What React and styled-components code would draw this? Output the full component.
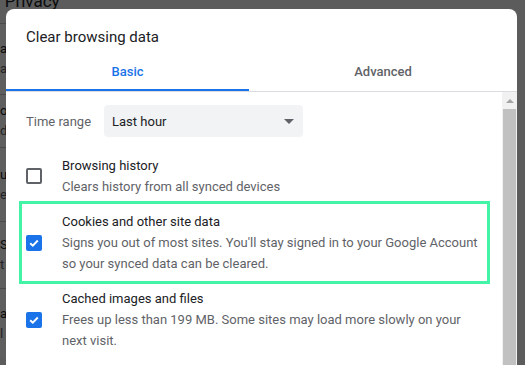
import React from "react"
import styled, { createGlobalStyle } from "styled-components"

const GlobalStyle = createGlobalStyle`
  html, body {
    margin: 0;
    padding: 0;
    overflow: hidden;
    background: #f8f9fa;
  }
  body {
    font-family: Roboto, "Liberation Sans", sans-serif;
    -webkit-font-smoothing: antialiased;
  }
`

const Screen = styled.div`
  position: relative;
  width: 525px;
  height: 365px;
  overflow: hidden;
  background: #f8f9fa;
`

// page behind the modal
const BackPage = styled.div`
  display: flex;
  flex-direction: column;
`

const BackHeading = styled.div`
  margin-top: -9px;
  margin-left: -34px;
  font-size: 17px;
  line-height: 20px;
  color: #202124;
`

const BackCard = styled.div`
  margin-top: 12px;
  width: 6px;
  overflow: hidden;
  background: #fff;
`

const BackRow = styled.div`
  display: flex;
  flex-direction: column;
  justify-content: center;
  height: ${p => p.h}px;
  border-top: 1px solid #c8c8c8;
  font-size: 13px;
  line-height: 20px;
  color: #202124;
  white-space: nowrap;
`

const BackSub = styled.span`
  color: #5f6368;
`

const Scrim = styled.div`
  position: absolute;
  inset: 0;
  background: rgba(0, 0, 0, 0.63);
`

const Dialog = styled.div`
  position: absolute;
  left: 6px;
  top: 9px;
  width: 511px;
  height: 400px;
  background: #fff;
  border-radius: 8px 8px 0 0;
  display: flex;
  flex-direction: column;
  overflow: hidden;
`

const Title = styled.h2`
  margin: 0;
  padding: 18px 20px 0;
  font-size: 15px;
  line-height: 20px;
  font-weight: 400;
  color: #202124;
`

const Tabs = styled.div`
  display: grid;
  grid-template-columns: 243px 1fr;
  margin-top: 8px;
  border-bottom: 1px solid #dadce0;
`

const Tab = styled.div`
  height: 36px;
  box-sizing: border-box;
  display: flex;
  align-items: center;
  justify-content: center;
  padding-bottom: 1px;
  font-size: 13px;
  font-weight: 500;
  color: ${p => (p.active ? "#1a73e8" : "#5f6368")};
  border-bottom: 2px solid ${p => (p.active ? "#1a73e8" : "transparent")};
`

const Body = styled.div`
  display: flex;
  flex: 1;
  min-height: 0;
`

const Content = styled.div`
  flex: 1;
  padding: 13px 15px 0 16px;
`

const Scrollbar = styled.div`
  width: 15px;
  background: #f1f1f1;
  display: flex;
  flex-direction: column;
  align-items: center;
`

const ArrowUp = styled.div`
  margin-top: 7px;
  width: 0;
  height: 0;
  border-left: 4px solid transparent;
  border-right: 4px solid transparent;
  border-bottom: 4px solid #a3a3a3;
`

const Thumb = styled.div`
  margin-top: 6px;
  align-self: stretch;
  margin-left: 1px;
  margin-right: 1px;
  flex: 1;
  background: #c1c1c1;
`

const RangeRow = styled.div`
  display: flex;
  align-items: center;
  padding-left: 4px;
`

const RangeLabel = styled.span`
  font-size: 13px;
  color: #5f6368;
  margin-right: 13px;
`

const Select = styled.div`
  width: 199px;
  height: 32px;
  box-sizing: border-box;
  display: flex;
  align-items: center;
  justify-content: space-between;
  padding: 0 9px 0 8px;
  background: #f1f3f4;
  border-radius: 4px;
  font-size: 13px;
  color: #202124;
`

const Caret = styled.span`
  width: 0;
  height: 0;
  border-left: 5px solid transparent;
  border-right: 5px solid transparent;
  border-top: 5px solid #5f6368;
`

const List = styled.div`
  margin-top: 11px;
  display: flex;
  flex-direction: column;
`

const Row = styled.div`
  display: flex;
  align-items: center;
  padding: 7px 0 7px 4px;
  outline: ${p => (p.highlight ? "3px solid #44f4a6" : "none")};
`

const Box = styled.span`
  flex: none;
  width: 16px;
  height: 16px;
  box-sizing: border-box;
  border-radius: 2px;
  display: flex;
  align-items: center;
  justify-content: center;
  background: ${p => (p.checked ? "#1a73e8" : "transparent")};
  border: ${p => (p.checked ? "none" : "2px solid #5f6368")};
`

const Text = styled.div`
  margin-left: 20px;
  flex: 1;
  font-size: 13px;
  line-height: 21px;
`

const ItemTitle = styled.div`
  color: #202124;
`

const ItemSub = styled.div`
  color: #5f6368;
`

const Check = () => (
  <svg width="12" height="12" viewBox="0 0 12 12">
    <path d="M2.2 6.2 L4.8 8.7 L9.8 3.5" fill="none" stroke="#fff" strokeWidth="1.9" />
  </svg>
)

const items = [
  {
    title: "Browsing history",
    sub: "Clears history from all synced devices",
    checked: false,
  },
  {
    title: "Cookies and other site data",
    sub: "Signs you out of most sites. You'll stay signed in to your Google Account so your synced data can be cleared.",
    checked: true,
    highlight: true,
  },
  {
    title: "Cached images and files",
    sub: "Frees up less than 199 MB. Some sites may load more slowly on your next visit.",
    checked: true,
  },
]

const backRows = [
  { h: 70, a: "ar", b: "ar" },
  { h: 52, a: "ok", b: "d" },
  { h: 73, a: "u", b: "e" },
  { h: 66, a: "S", b: "t" },
  { h: 69, a: "a", b: "l" },
]

export default function App() {
  return (
    <Screen>
      <GlobalStyle />
      <BackPage>
        <BackHeading>Your Privacy</BackHeading>
        <BackCard>
          {backRows.map(r => (
            <BackRow key={r.a} h={r.h}>
              <span>{r.a}</span>
              <BackSub>{r.b}</BackSub>
            </BackRow>
          ))}
        </BackCard>
      </BackPage>
      <Scrim />
      <Dialog>
        <Title>Clear browsing data</Title>
        <Tabs>
          <Tab active>Basic</Tab>
          <Tab>Advanced</Tab>
        </Tabs>
        <Body>
          <Content>
            <RangeRow>
              <RangeLabel>Time range</RangeLabel>
              <Select>
                Last hour
                <Caret />
              </Select>
            </RangeRow>
            <List>
              {items.map(it => (
                <Row key={it.title} highlight={it.highlight}>
                  <Box checked={it.checked}>{it.checked && <Check />}</Box>
                  <Text>
                    <ItemTitle>{it.title}</ItemTitle>
                    <ItemSub>{it.sub}</ItemSub>
                  </Text>
                </Row>
              ))}
            </List>
          </Content>
          <Scrollbar>
            <ArrowUp />
            <Thumb />
          </Scrollbar>
        </Body>
      </Dialog>
    </Screen>
  )
}
